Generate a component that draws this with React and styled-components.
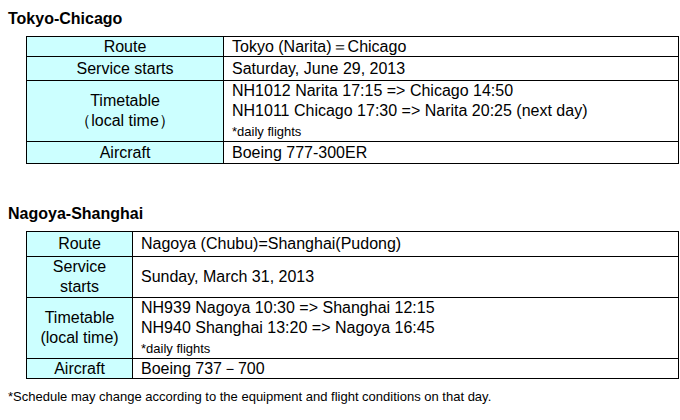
import React from "react";
import styled, { createGlobalStyle } from "styled-components";

const GlobalStyle = createGlobalStyle`
  body {
    margin: 0;
    background: #fff;
    font-family: Arial, "Liberation Sans", sans-serif;
    color: #000;
  }
`;

const routes = [
  {
    title: "Tokyo-Chicago",
    labelWidth: 196,
    top: 9,
    rows: [
      { label: "Route", height: 20, value: ["Tokyo (Narita)＝Chicago"] },
      { label: "Service starts", height: 24, value: ["Saturday, June 29, 2013"] },
      {
        label: ["Timetable", "（local time）"],
        height: 61,
        value: [
          "NH1012 Narita 17:15 => Chicago 14:50",
          "NH1011 Chicago 17:30 => Narita 20:25 (next day)",
        ],
        note: "*daily flights",
      },
      { label: "Aircraft", height: 22, value: ["Boeing 777-300ER"] },
    ],
  },
  {
    title: "Nagoya-Shanghai",
    labelWidth: 105,
    top: 40,
    rows: [
      { label: "Route", height: 25, value: ["Nagoya (Chubu)=Shanghai(Pudong)"] },
      { label: ["Service", "starts"], height: 41, value: ["Sunday, March 31, 2013"] },
      {
        label: ["Timetable", "(local time)"],
        height: 61,
        value: [
          "NH939 Nagoya 10:30 =>  Shanghai 12:15",
          "NH940 Shanghai 13:20 => Nagoya 16:45",
        ],
        note: "*daily flights",
      },
      { label: "Aircraft", height: 20, value: ["Boeing 737－700"] },
    ],
  },
];

const Page = styled.div`
  width: 680px;
  padding: 0 0 0 8px;
`;

const Title = styled.h2`
  margin: ${(p) => p.$top}px 0 0 0;
  font-size: 16px;
  line-height: 20px;
  font-weight: bold;
`;

const Table = styled.table`
  margin: 7px 0 0 18px;
  width: 653px;
  border-collapse: collapse;
  font-size: 16px;
`;

const Row = styled.tr`
  height: ${(p) => p.$h}px;
`;

const Label = styled.td`
  width: ${(p) => p.$w}px;
  background: #ccffff;
  border: 1px solid #000;
  text-align: center;
  vertical-align: middle;
  line-height: 19px;
  padding: 0;
`;

const Value = styled.td`
  border: 1px solid #000;
  padding: 0 0 0 8px;
  vertical-align: middle;
  line-height: 19px;
`;

const Line = styled.div`
  line-height: ${(p) => (p.$multi ? 20 : 18)}px;
`;

const Note = styled.div`
  font-size: 13px;
  line-height: 18px;
  padding-top: 2px;
`;

const Footer = styled.p`
  margin: 10px 0 0 0;
  font-size: 13px;
  line-height: 16px;
`;

const Lines = ({ items }) => {
  const list = [].concat(items);
  return list.map((t, i) => (
    <Line key={i} $multi={list.length > 1}>
      {t}
    </Line>
  ));
};

const RouteTable = ({ route }) => (
  <>
    <Title $top={route.top}>{route.title}</Title>
    <Table>
      <tbody>
        {route.rows.map((r, i) => (
          <Row key={i} $h={r.height}>
            <Label $w={route.labelWidth}>
              <Lines items={r.label} />
            </Label>
            <Value>
              <Lines items={r.value} />
              {r.note && <Note>{r.note}</Note>}
            </Value>
          </Row>
        ))}
      </tbody>
    </Table>
  </>
);

export default function App() {
  return (
    <Page>
      <GlobalStyle />
      {routes.map((r) => (
        <RouteTable key={r.title} route={r} />
      ))}
      <Footer>
        *Schedule may change according to the equipment and flight conditions on that day.
      </Footer>
    </Page>
  );
}
